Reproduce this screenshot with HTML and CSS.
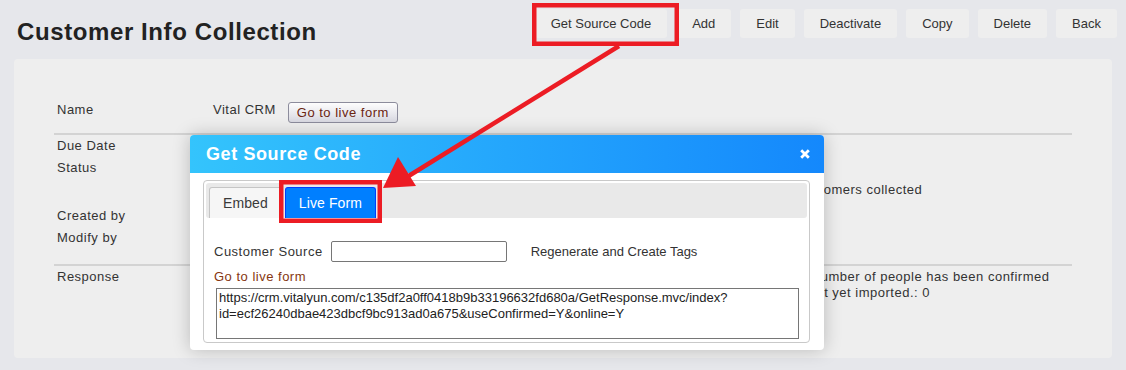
FILE: index.html
```html
<!DOCTYPE html>
<html>
	<head>
		<meta charset="utf-8">
		<title>Customer Info Collection</title>
		<link rel="stylesheet" href="styles.css">
	</head>
	<body>
		<div class="top">
			<h1 class="title">Customer Info Collection</h1>
			<div class="toolbar">
				<button class="tbtn">Get Source Code</button>
				<button class="tbtn">Add</button>
				<button class="tbtn">Edit</button>
				<button class="tbtn">Deactivate</button>
				<button class="tbtn">Copy</button>
				<button class="tbtn">Delete</button>
				<button class="tbtn">Back</button>
			</div>
		</div>

		<div class="card">
			<div class="section first">
				<div class="row">
					<span class="lbl">Name</span>
					<div class="val namecell">
						<span>Vital CRM</span>
						<button class="livebtn">Go to live form</button>
					</div>
				</div>
			</div>
			<div class="section middle">
				<div class="row">
					<span class="lbl">Due Date</span>
					<span class="val"></span>
				</div>
				<div class="row">
					<span class="lbl">Status</span>
					<span class="val"></span>
					<span class="stat second">Customers collected</span>
				</div>
				<div class="row gap">
					<span class="lbl">Created by</span>
					<span class="val"></span>
				</div>
				<div class="row">
					<span class="lbl">Modify by</span>
					<span class="val"></span>
				</div>
			</div>
			<div class="section">
				<div class="row">
					<span class="lbl">Response</span>
					<span class="val"></span>
					<span class="stat multi">The number of people has been confirmed<br>but not yet imported.: 0</span>
				</div>
			</div>
		</div>

		<div class="dialog">
			<div class="dlghead">
				<span>Get Source Code</span>
				<svg class="close" width="10" height="10" viewBox="0 0 10 10">
					<path d="M1.2 1.2 L8.8 8.8 M8.8 1.2 L1.2 8.8" stroke="#fff" stroke-width="2.8" fill="none"/>
				</svg>
			</div>
			<div class="dlgbody">
				<div class="tabbox">
					<div class="tabbar">
						<span class="tab">Embed</span>
						<span class="tab active">Live Form</span>
					</div>
					<div class="tabcontent">
						<div class="srcrow">
							<label for="custsrc" class="srclbl">Customer Source</label>
							<input type="text" id="custsrc" class="srcinput">
							<span class="regen">Regenerate and Create Tags</span>
						</div>
						<div class="golink">Go to live form</div>
						<textarea class="url" readonly>https://crm.vitalyun.com/c135df2a0ff0418b9b33196632fd680a/GetResponse.mvc/index?id=ecf26240dbae423dbcf9bc913ad0a675&amp;useConfirmed=Y&amp;online=Y</textarea>
					</div>
				</div>
			</div>
		</div>

		<!-- annotation: red boxes + arrow -->
		<svg class="arrow" width="1126" height="370" viewBox="0 0 1126 370">
			<rect x="534.25" y="5.25" width="142.5" height="38.5" fill="none" stroke="#ec1c24" stroke-width="4.5"/>
			<rect x="281.25" y="182.25" width="98.5" height="38.5" fill="none" stroke="#ec1c24" stroke-width="4.5"/>
			<line x1="619" y1="46" x2="407" y2="177" stroke="#ec1c24" stroke-width="4.5"/>
			<polygon points="398,157 383,188 416,186" fill="#ec1c24"/>
		</svg>
	</body>
</html>
```

FILE: styles.css
```css
body {
	margin: 0; background: #e6e7eb; color: #333;
	font-family: "Liberation Sans", Arial, sans-serif; font-size: 13px; letter-spacing: 0.5px;
}
.top {
	display: flex; justify-content: space-between; align-items: flex-start; padding: 0 9px 0 17px;
}
.title {
	margin: 17px 0 0; font-size: 24px; line-height: 30px; font-weight: bold; color: #222; letter-spacing: 0.6px;
}
.toolbar {
	display: flex; gap: 9px; margin-top: 9px;
}
.tbtn {
	height: 29px; padding: 0 16px; border: 0; border-radius: 3px; background: #eeeeee; color: #333;
	font-family: "Liberation Sans", Arial, sans-serif; font-size: 13px; letter-spacing: 0;
}

.card {
	margin: 12px 14px 0; height: 299px; box-sizing: border-box; padding: 40px 40px 0;
	background: #eeeeee; border-radius: 4px;
}
.section {
	border-bottom: 2px solid #d3d3d3;
}
.section:last-child {
	border-bottom: 0;
}
.section.first {
	padding-bottom: 10px;
}
.section.middle {
	padding-bottom: 15px;
}
.row {
	display: grid; grid-template-columns: 159px 572px 1fr; line-height: 22px; align-items: start;
}
.row.gap {
	margin-top: 4px;
}
.lbl {
	padding-left: 3px;
}
.namecell {
	display: flex; align-items: flex-start;
}
.livebtn {
	height: 21px; margin: 3px 0 0 12px; padding: 0 8px; border: 1px solid #8c8c9c; border-radius: 3px;
	background: linear-gradient(#fdfdfd, #d8d8e1); color: #6b2410;
	font-family: "Liberation Sans", Arial, sans-serif; font-size: 13px; letter-spacing: 0.5px;
}
.stat.second {
	padding-top: 22px; text-indent: 10px;
}
.stat.multi {
	line-height: 16px; padding-top: 3px;
}

.dialog {
	position: absolute; left: 190px; top: 135px; width: 634px;
	background: #fff; border-radius: 4px; box-shadow: 0 0 18px rgba(0, 0, 0, 0.22);
}
.dlghead {
	height: 38px; box-sizing: border-box; padding: 0 14px 0 16px;
	display: flex; justify-content: space-between; align-items: center;
	background: linear-gradient(90deg, #34c4fc, #1488fc); border-radius: 4px 4px 0 0;
	color: #fff; font-size: 18px; font-weight: bold; letter-spacing: 0.6px;
}
.close {
	display: block;
}
.dlgbody {
	padding: 7px 14px 7px 13px;
}
.tabbox {
	border: 1px solid #c9c9c9; border-radius: 4px; padding: 2px;
}
.tabbar {
	height: 35px; box-sizing: border-box; padding-left: 3px;
	display: flex; align-items: flex-end; gap: 3px;
	background: #e9e9e9; border-radius: 3px;
}
.tab {
	height: 31px; box-sizing: border-box; padding: 0 13px; line-height: 30px;
	border: 1px solid #c5c5c5; border-bottom: 0; border-radius: 3px 3px 0 0;
	background: #f6f6f6; color: #3a3a3a; font-size: 14px; letter-spacing: 0.1px;
}
.tab.active {
	background: #007fff; border-color: #003eff; color: #fff;
}
.tabcontent {
	padding: 23px 8px 1px 8px;
}
.srcrow {
	display: flex; align-items: center; height: 21px;
}
.srclbl {
	margin-right: 8px;
}
.srcinput {
	width: 176px; height: 21px; box-sizing: border-box; margin: 0;
	border: 1px solid #767676; border-radius: 2px; background: #fff;
}
.regen {
	margin-left: 24px; letter-spacing: 0;
}
.golink {
	margin-top: 7px; line-height: 15px; color: #86360f;
}
.url {
	display: block; width: 583px; height: 51px; box-sizing: border-box; margin: 4px 0 0 2px;
	padding: 1px 2px; border: 1px solid #767676; resize: none; color: #222;
	font-family: "Liberation Sans", Arial, sans-serif; font-size: 13px; line-height: 16px; letter-spacing: 0;
}
.arrow {
	position: absolute; left: 0; top: 0; pointer-events: none;
}
```
